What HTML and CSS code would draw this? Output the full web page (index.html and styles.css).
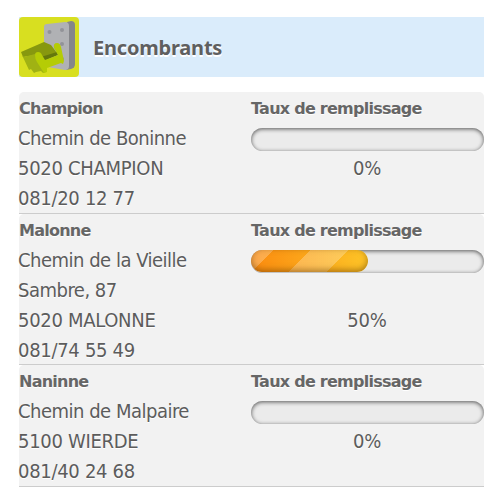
FILE: index.html
```html
<!DOCTYPE html>
<html lang="fr">
<head>
    <meta charset="UTF-8">
    <meta name="viewport" content="width=device-width, initial-scale=1.0">
    <title>Encombrants</title>
    <link rel="stylesheet" href="styles.css">
</head>
<body>
<div class="header">
    <svg class="logo" width="60" height="60" viewBox="0 0 60 60">
        <rect width="60" height="60" rx="4" fill="#d8df20"/>
        <path d="M48 5l4-1q4 0 4 4v39q0 4-4 5l-5 1z" fill="#85868a"/>
        <path d="M28 7l18-2q4 0 4 4v40q0 4-4 4l-17-3q-4-1-4-4V10q0-3 3-3z" fill="#b0b1b4"/>
        <g fill="#929398">
            <circle cx="30.500" cy="15" r="2"/>
            <circle cx="43" cy="13" r="2"/>
            <circle cx="43" cy="27" r="2"/>
            <circle cx="43" cy="42" r="2"/>
        </g>
        <path d="M2 35L25 25l7 3 6 8-16 6-6-4-12 2z" fill="#87980f"/>
        <path d="M3 38l2 2 11-3 11 18-3 1-2-2-5 1-2 1-3-4-2 1z" fill="#a0b213"/>
        <path d="M22 40l16-5 1 3-14 6z" fill="#65780c"/>
        <path d="M16 38q0-3 3-3 3 0 4 3l3 5 13-5-4-7q-1-5 3-5 3 0 4 4l3 14-1 3-2-1-14 5v4l-3 1-7-11q-2-3-2-7z" fill="#b5cc05"/>
    </svg>
    <h1>Encombrants</h1>
</div>
<div class="list">
    <div class="row">
        <div class="address">
            <h2>Champion</h2>
            <p>Chemin de Boninne</p>
            <p class="num">5020 CHAMPION</p>
            <p class="num">081/20 12 77</p>
        </div>
        <div class="rate">
            <h2>Taux de remplissage</h2>
            <div class="progress"></div>
            <p class="percent">0%</p>
        </div>
    </div>
    <div class="row tall">
        <div class="address">
            <h2>Malonne</h2>
            <p>Chemin de la Vieille</p>
            <p>Sambre, 87</p>
            <p class="num">5020 MALONNE</p>
            <p class="num">081/74 55 49</p>
        </div>
        <div class="rate">
            <h2>Taux de remplissage</h2>
            <div class="progress"><div class="bar" style="width: 50%"></div></div>
            <p class="percent">50%</p>
        </div>
    </div>
    <div class="row">
        <div class="address">
            <h2>Naninne</h2>
            <p>Chemin de Malpaire</p>
            <p class="num">5100 WIERDE</p>
            <p class="num">081/40 24 68</p>
        </div>
        <div class="rate">
            <h2>Taux de remplissage</h2>
            <div class="progress"></div>
            <p class="percent">0%</p>
        </div>
    </div>
</div>
</body>
</html>
```
FILE: styles.css
```css
* {
    margin: 0;
    padding: 0;
    box-sizing: border-box;
}
body {
    background: #fff;
    color: #5c5c5c;
    padding: 17px 18px 0 19px;
    font-family: "DejaVu Sans Condensed", sans-serif;
    font-size: 20px;
    line-height: 30px;
    text-shadow: 0 1px 0 #fff;
}
.header {
    display: flex;
    align-items: center;
    height: 60px;
    background: #daecfb;
}
.logo {
    flex: none;
}
h1 {
    margin-left: 14px;
    padding-top: 2px;
    font-family: "Noto Sans", sans-serif;
    font-size: 20px;
    letter-spacing: -0.2px;
    color: #5f5f5f;
    text-shadow: 0 2px 0 #fff;
}
h2 {
    padding-top: 1px;
    height: 30px;
    font-family: "DejaVu Sans", sans-serif;
    font-size: 16px;
    letter-spacing: -0.75px;
    color: #666;
    white-space: nowrap;
}
.list {
    margin-top: 15px;
}
.row {
    display: flex;
    height: 122px;
    padding-top: 1px;
    background: #f2f2f2;
    border-bottom: 1px solid #ccc;
    border-radius: 5px 5px 0 0;
}
.row.tall {
    height: 151px;
}
.address {
    width: 232px;
}
.address p {
    margin-left: -1px;
    white-space: nowrap;
    letter-spacing: -0.5px;
}
.address .num {
    letter-spacing: -0.3px;
}
.rate {
    flex: 1;
}
.progress {
    height: 23px;
    margin: 5px 0 2px;
    background: #ebebeb;
    border-radius: 12px;
    box-shadow: inset 0 1px 4px rgba(0,0,0,0.65);
}
.tall .progress {
    margin-bottom: 32px;
}
.bar {
    height: 22px;
    border-radius: 11px;
    background: linear-gradient(135deg, rgba(255,255,255,0.25) 0 16px, transparent 16px 42px, rgba(255,255,255,0.25) 42px 69px, transparent 69px), linear-gradient(to right, #fb8b0f, #fdc427);
    box-shadow: inset 0 -2px 6px rgba(90,50,0,0.5);
}
.percent {
    text-align: center;
    letter-spacing: -0.2px;
    margin-left: -1px;
}
```
